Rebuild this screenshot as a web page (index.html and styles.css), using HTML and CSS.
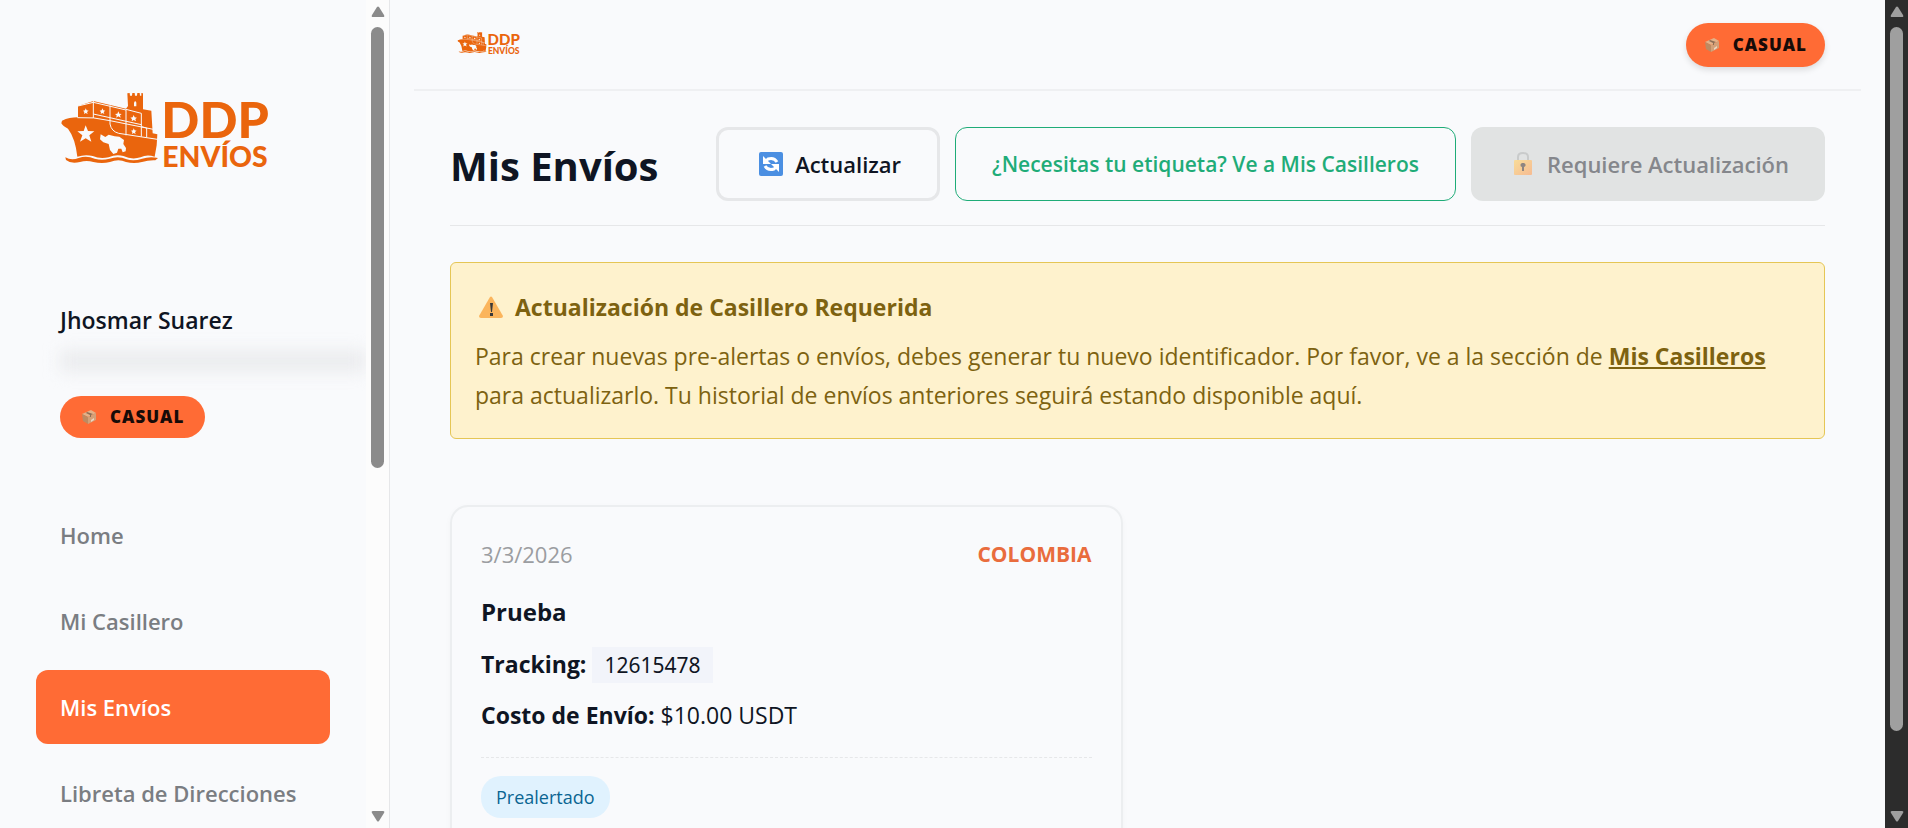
FILE: index.html
```html
<!DOCTYPE html>
<html lang="es">
<head>
    <meta charset="UTF-8">
    <meta name="viewport" content="width=device-width, initial-scale=1.0">
    <title>Mis Envíos - DDP Envíos</title>
    <link rel="stylesheet" href="styles.css">
</head>
<body>
    <!-- Shared icons -->
    <svg class="sprite" aria-hidden="true">
        <symbol id="ship" viewBox="60 60 300 240">
            <g fill="#ea650d">
                <path d="M66 152Q88 142 114 142L114 108L160 93L258 116L264 108L262 70L269 69L270 77L276 77L277 69L284 69L285 77L291 77L292 69L299 69L300 77L304 77L304 69L309 70L309 118L334 122L338 190L352 193L350 226L344 260Q320 252 302 262Q275 270 250 258Q228 252 206 262Q180 268 158 258Q135 252 112 260Q106 205 84 176Q68 168 64 160Z"/>
                <path d="M76 262Q94 272 116 264Q140 256 164 266Q186 272 208 266Q236 256 260 268Q282 274 306 266Q330 258 354 264L346 271Q326 270 306 276Q282 282 258 276Q236 266 210 276Q186 282 160 276Q140 270 120 276Q92 282 78 270Z"/>
            </g>
            <g fill="none" stroke="#f9fafc" stroke-width="3">
                <path d="M112 143Q160 140 210 152L350 180M160 93V144M210 106V162Q214 184 236 190L352 208M114 108L160 97L258 120M258 118V196M160 132L304 164M258 118L304 130V200M304 170L320 174V202"/>
            </g>
            <g fill="#f9fafc">
                <path d="M137 166L144 183L163 184L148 196L154 215L137 205L120 215L127 196L112 184L131 183Z"/>
                <path d="M137 115L140 121L146 122L141 126L143 132L137 129L132 132L133 126L129 122L135 121Z"/>
                <path d="M187 115L190 121L196 122L191 126L193 132L187 129L182 132L183 126L179 122L185 121Z"/>
                <path d="M235 124L238 131L245 132L240 136L242 143L235 139L229 143L230 136L225 132L232 131Z"/>
                <path d="M281 135L284 142L291 143L286 147L288 154L281 150L275 154L276 147L271 143L278 142Z"/>
                <path d="M281 175L284 181L290 182L285 186L287 192L281 189L276 192L277 186L273 182L279 181Z"/>
                <path d="M182 193L196 201L206 194L224 199L238 200L252 210L250 222L258 234L257 244L248 247L244 236L235 236L231 248L220 252L210 240L206 222L190 217L180 208Z"/>
                <path d="M282 98Q286 90 289 98V109H282Z"/>
            </g>
        </symbol>
        <symbol id="box" viewBox="0 0 16 16">
            <path fill="#e3b188" d="M1 5L10 1L15 4L7 8Z"/>
            <path fill="#bd8a62" d="M1 5L7 8V15L2 12Z"/>
            <path fill="#d3a078" d="M7 8L15 4V11L7 15Z"/>
            <path fill="#8d6e56" d="M5 4L6 3L12 5L10 6L10 8L9 8V6Z"/>
            <path fill="#ecd6c2" d="M10 11L13 9V11L10 13Z"/>
        </symbol>
        <symbol id="arrow-up" viewBox="0 0 14 11">
            <path d="M6 1Q7 0 8 1L13 9Q14 11 12 11H2Q0 11 1 9Z"/>
        </symbol>
        <symbol id="arrow-down" viewBox="0 0 14 11">
            <path d="M6 10Q7 11 8 10L13 2Q14 0 12 0H2Q0 0 1 2Z"/>
        </symbol>
    </svg>

    <aside class="sidebar">
        <div class="sidebar-content">
            <svg class="logo sidebar-logo" viewBox="0 0 636 240">
                <use href="#ship" width="300" height="240"/>
                <text class="logo-big" x="304" y="143">DDP</text>
                <text class="logo-small" x="307" y="230">ENVÍOS</text>
            </svg>

            <div class="user-info">
                <p class="user-name">Jhosmar Suarez</p>
                <div class="user-email"></div>
                <span class="badge"><svg class="badge-icon"><use href="#box"/></svg>CASUAL</span>
            </div>

            <nav class="sidebar-nav">
                <a href="#">Home</a>
                <a href="#">Mi Casillero</a>
                <a href="#" class="active">Mis Envíos</a>
                <a href="#">Libreta de Direcciones</a>
            </nav>
        </div>
        <div class="scrollbar scrollbar-light" aria-hidden="true">
            <svg class="scroll-arrow"><use href="#arrow-up"/></svg>
            <div class="scroll-track"><div class="scroll-thumb"></div></div>
            <svg class="scroll-arrow"><use href="#arrow-down"/></svg>
        </div>
    </aside>

    <main class="main">
        <header class="topbar">
            <svg class="logo topbar-logo" viewBox="0 0 636 240">
                <use href="#ship" width="300" height="240"/>
                <text class="logo-big" x="304" y="143">DDP</text>
                <text class="logo-small" x="307" y="230">ENVÍOS</text>
            </svg>
            <span class="badge badge-shadow"><svg class="badge-icon"><use href="#box"/></svg>CASUAL</span>
        </header>

        <div class="content">
            <div class="page-header">
                <h1>Mis Envíos</h1>
                <div class="actions">
                    <button type="button" class="btn btn-outline">
                        <svg class="btn-icon" viewBox="0 0 24 24">
                            <rect x="0" y="0" width="24" height="24" rx="2" fill="#4b8fe2"/>
                            <path fill="none" stroke="#fff" stroke-width="3" d="M18 10Q15 5 9 7L7 9M6 14Q9 19 15 17L17 15"/>
                            <path fill="#fff" d="M4 4V12H12ZM20 20V12H12Z"/>
                        </svg>
                        Actualizar
                    </button>
                    <a href="#" class="btn btn-green">¿Necesitas tu etiqueta? Ve a Mis Casilleros</a>
                    <button type="button" class="btn btn-disabled" disabled>
                        <svg class="btn-icon" viewBox="0 0 24 24">
                            <defs>
                                <linearGradient id="lock" x1="0" y1="0" x2="1" y2="1">
                                    <stop offset="0" stop-color="#f8dc98"/>
                                    <stop offset="1" stop-color="#f6bb92"/>
                                </linearGradient>
                            </defs>
                            <path fill="none" stroke="#c9cbcb" stroke-width="2" d="M7 9V5Q7 1 12 1T17 5V9"/>
                            <rect x="3" y="8" width="18" height="15" rx="1" fill="url(#lock)"/>
                            <path fill="#8f8581" d="M12 11A2 2 0 0 1 13 15V19H11V15A2 2 0 0 1 12 11Z"/>
                        </svg>
                        Requiere Actualización
                    </button>
                </div>
            </div>

            <section class="alert">
                <h2>
                    <svg class="alert-icon" viewBox="0 0 24 22">
                        <path fill="#fbb55c" d="M11 1Q12 0 13 1L24 20Q24 22 22 22H2Q0 22 0 20Z"/>
                        <path fill="#3b3a39" d="M11 7H14L13 16H12ZM11 17H14V20H11Z"/>
                    </svg>
                    Actualización de Casillero Requerida
                </h2>
                <p>Para crear nuevas pre-alertas o envíos, debes generar tu nuevo identificador. Por favor, ve a la sección de <a href="#">Mis Casilleros</a> para actualizarlo. Tu historial de envíos anteriores seguirá estando disponible aquí.</p>
            </section>

            <div class="shipments">
                <article class="shipment-card">
                    <div class="card-header">
                        <span class="card-date">3/3/2026</span>
                        <span class="card-country">COLOMBIA</span>
                    </div>
                    <h3>Prueba</h3>
                    <p><strong>Tracking:</strong> <span class="tracking">12615478</span></p>
                    <p><strong>Costo de Envío:</strong> $10.00 USDT</p>
                    <div class="card-footer">
                        <span class="status">Prealertado</span>
                    </div>
                </article>
            </div>
        </div>
    </main>

    <div class="scrollbar scrollbar-dark" aria-hidden="true">
        <svg class="scroll-arrow"><use href="#arrow-up"/></svg>
        <div class="scroll-track"><div class="scroll-thumb"></div></div>
        <svg class="scroll-arrow"><use href="#arrow-down"/></svg>
    </div>
</body>
</html>
```
FILE: styles.css
```css
:root {
    --primary-color: #ff6b35;
    --logo-color: #ea650d;
    --green: #1fac78;
    --text-color: #0f1523;
    --muted: #7a7d82;
    --border: #e6e7e9;
    --bg-color: #f9fafc;
}

* {
    margin: 0;
    padding: 0;
    box-sizing: border-box;
}

body {
    display: flex;
    height: 100vh;
    overflow: hidden;
    font-family: 'Segoe UI', 'Open Sans', 'Noto Sans', sans-serif;
    font-size: 23px;
    line-height: 38px;
    color: var(--text-color);
    background: var(--bg-color);
}

.sprite {
    position: absolute;
    width: 0;
    height: 0;
}

/* Logo */
.logo {
    display: block;
    overflow: visible;
    fill: var(--logo-color);
    font-family: Lato, sans-serif;
    font-weight: 900;
}

.logo-big {
    font-size: 150px;
}

.logo-small {
    font-size: 85px;
}

/* Sidebar */
.sidebar {
    display: flex;
    flex: 0 0 390px;
    border-right: 1px solid var(--border);
    overflow: hidden;
}

.sidebar-content {
    flex: 1;
    min-width: 0;
    padding: 90px 0 0 36px;
    overflow: hidden;
}

.sidebar-logo {
    width: 212px;
    height: 80px;
    margin-left: 24px;
}

.user-info {
    padding: 131px 0 0 24px;
}

.user-name {
    font-weight: 600;
}

.user-email {
    height: 22px;
    margin: 11px 0 24px;
    background: #ebecee;
    filter: blur(8px);
}

.sidebar-nav {
    display: flex;
    flex-direction: column;
    gap: 12px;
    padding: 60px 36px 0 0;
}

.sidebar-nav a {
    padding: 18px 24px;
    border-radius: 12px;
    color: var(--muted);
    font-size: 22px;
    font-weight: 600;
    text-decoration: none;
    white-space: nowrap;
}

.sidebar-nav a.active {
    background: var(--primary-color);
    color: white;
}

/* Badge */
.badge {
    display: inline-flex;
    align-items: center;
    gap: 13px;
    height: 42px;
    padding: 0 21px;
    border-radius: 24px;
    background: var(--primary-color);
    color: #170b08;
    font-size: 17px;
    font-weight: 800;
    letter-spacing: 1px;
    line-height: 24px;
}

.badge-icon {
    width: 16px;
    height: 16px;
}

.badge-shadow {
    height: 44px;
    padding: 0 18px;
    box-shadow: 0 3px 6px rgba(0, 0, 0, 0.12);
}

/* Scrollbars */
.scrollbar {
    display: flex;
    flex-direction: column;
    align-items: center;
    flex: 0 0 23px;
    padding: 6px 0;
    background: #fcfcfc;
    fill: #8b8b8b;
    color: #8b8b8b;
}

.scrollbar-dark {
    background: #2c2c2c;
    fill: #9f9f9f;
    color: #9f9f9f;
}

.scroll-arrow {
    width: 14px;
    height: 11px;
}

.scroll-track {
    flex: 1;
    padding: 10px 0;
}

.scroll-thumb {
    width: 13px;
    height: 57%;
    border-radius: 7px;
    background: currentColor;
}

.scrollbar-dark .scroll-thumb {
    height: 91%;
}

/* Main area */
.main {
    flex: 1;
    min-width: 0;
    overflow: hidden;
}

.topbar {
    display: flex;
    justify-content: space-between;
    align-items: center;
    height: 91px;
    margin: 0 24px;
    padding: 0 36px 0 43px;
    border-bottom: 2px solid #eff0f2;
}

.topbar-logo {
    width: 64px;
    height: 24px;
    margin-bottom: 4px;
}

.content {
    padding: 36px 60px;
}

.page-header {
    display: flex;
    justify-content: space-between;
    align-items: center;
    padding-bottom: 24px;
    border-bottom: 1px solid var(--border);
}

h1 {
    padding-top: 3px;
    font-size: 40px;
    font-weight: 700;
    line-height: 60px;
    white-space: nowrap;
}

.actions {
    display: flex;
    gap: 15px;
}

.btn {
    display: inline-flex;
    align-items: center;
    gap: 12px;
    height: 74px;
    padding: 0 36px 0 40px;
    border: none;
    border-radius: 12px;
    background: transparent;
    color: var(--text-color);
    font-family: inherit;
    font-size: 23px;
    font-weight: 600;
    text-decoration: none;
    white-space: nowrap;
}

.btn-outline {
    border: 3px solid var(--border);
    font-size: 22px;
}

.btn-green {
    padding: 0 36px;
    border: 1px solid var(--green);
    color: var(--green);
    font-size: 21px;
}

.btn-disabled {
    background: #e1e3e3;
    color: #85878c;
    font-size: 22px;
}

.btn-icon {
    width: 24px;
    height: 24px;
}

/* Alert */
.alert {
    margin-top: 36px;
    padding: 25px 24px 23px;
    border: 1px solid #e5c655;
    border-radius: 6px;
    background: #fef2cd;
    color: #7d6210;
}

.alert h2 {
    display: flex;
    align-items: center;
    gap: 12px;
    margin-bottom: 11px;
    padding-left: 4px;
    font-size: 23px;
    font-weight: 700;
}

.alert-icon {
    width: 24px;
    height: 22px;
}

.alert p {
    line-height: 39px;
}

.alert a {
    color: inherit;
    font-weight: 700;
}

/* Shipments */
.shipments {
    display: grid;
    grid-template-columns: repeat(2, 1fr);
    gap: 30px;
    margin-top: 66px;
}

.shipment-card {
    padding: 28px 29px 30px;
    border: 2px solid #eceef0;
    border-radius: 18px;
    box-shadow: 0 2px 6px rgba(0, 0, 0, 0.03);
}

.card-header {
    display: flex;
    justify-content: space-between;
    margin-bottom: 20px;
}

.card-date {
    color: #9b9da1;
    font-size: 22px;
}

.card-country {
    color: #e96c3d;
    font-size: 21px;
    font-weight: 700;
}

.shipment-card h3 {
    margin-bottom: 14px;
    font-size: 24px;
}

.shipment-card p {
    margin-bottom: 13px;
}

.tracking {
    display: inline-block;
    padding: 0 12px;
    background: #f2f4fa;
    font-family: 'Noto Sans', sans-serif;
    font-size: 21px;
    line-height: 36px;
}

.card-footer {
    margin-top: 23px;
    padding-top: 18px;
    border-top: 1px dashed var(--border);
}

.status {
    display: inline-block;
    padding: 0 15px;
    border-radius: 20px;
    background: #e0f2fe;
    color: #0a6592;
    font-size: 18px;
    font-weight: 500;
    line-height: 42px;
}
```
